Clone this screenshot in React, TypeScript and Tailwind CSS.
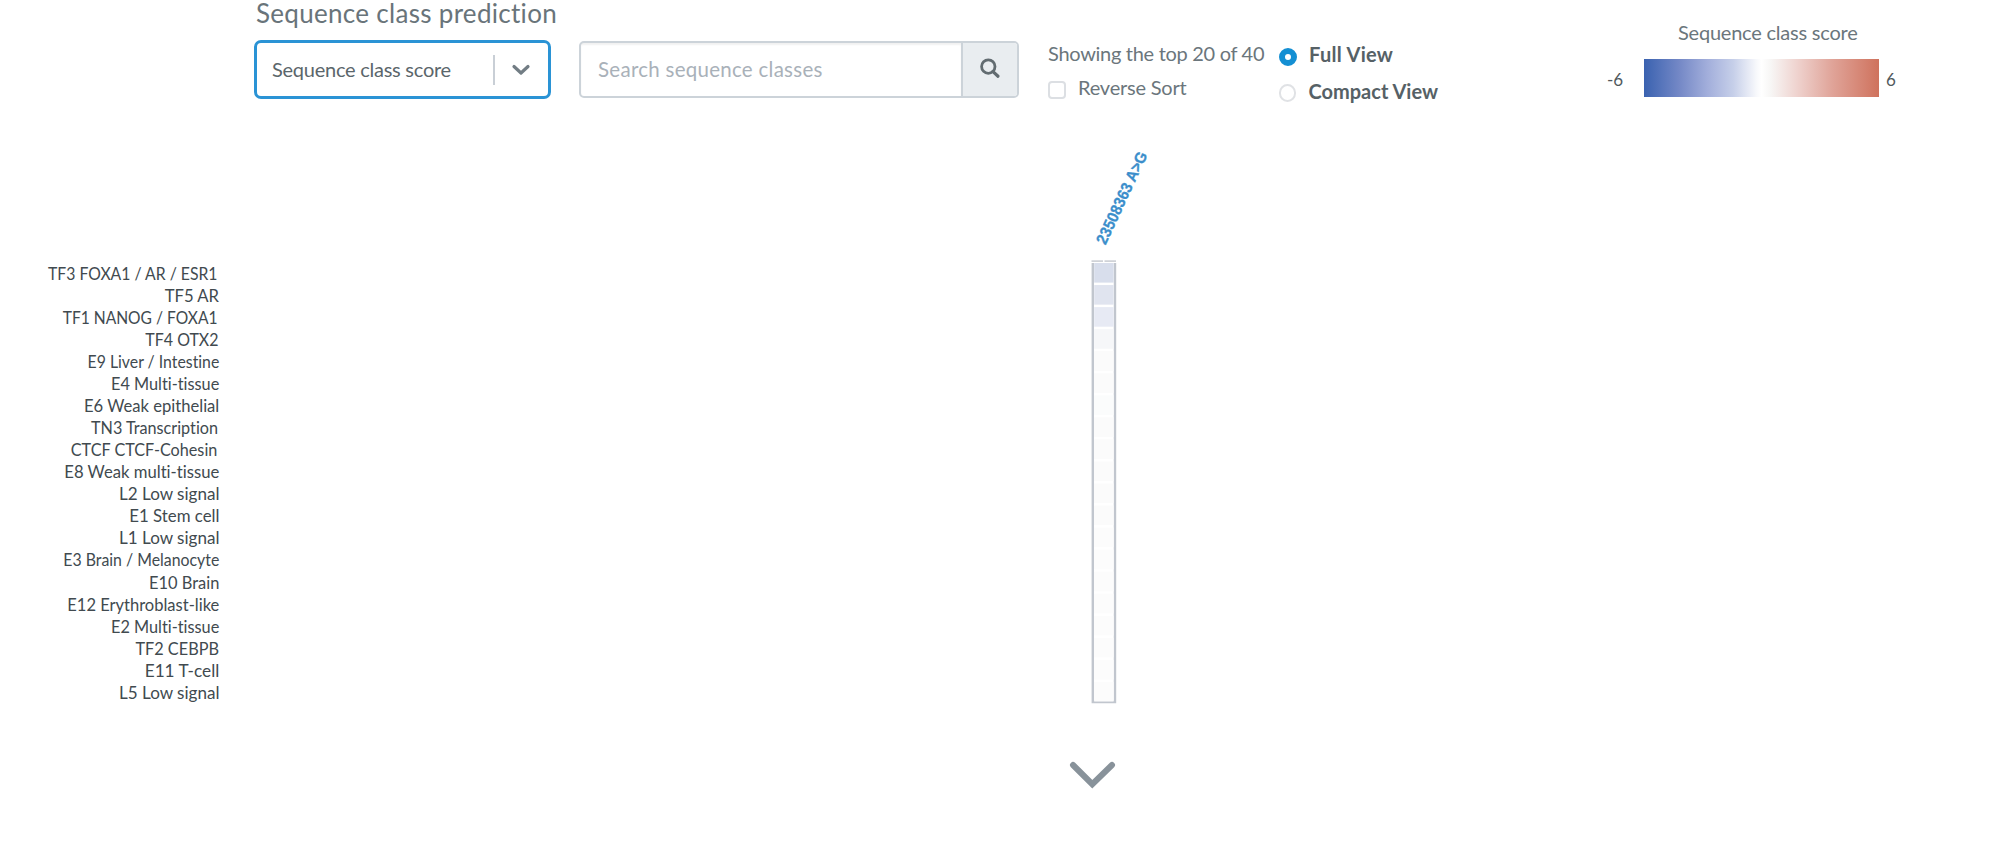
import React from "react";

type Row = { label: string; left: number; right: number; color: string };

const rows: Row[] = [
  { label: "TF3 FOXA1 / AR / ESR1", left: 48, right: 217.5, color: "#d8deec" },
  { label: "TF5 AR", left: 164.7, right: 219, color: "#e0e4ef" },
  { label: "TF1 NANOG / FOXA1", left: 62.7, right: 217.5, color: "#e7eaf4" },
  { label: "TF4 OTX2", left: 145.3, right: 218.5, color: "#f6f7f9" },
  { label: "E9 Liver / Intestine", left: 87.6, right: 219.3, color: "#fbfbfb" },
  { label: "E4 Multi-tissue", left: 111, right: 219.3, color: "#fbfbfb" },
  { label: "E6 Weak epithelial", left: 84, right: 219.3, color: "#fbfcfc" },
  { label: "TN3 Transcription", left: 91, right: 218, color: "#fbfbfb" },
  { label: "CTCF CTCF-Cohesin", left: 70.8, right: 217.3, color: "#fbfbfb" },
  { label: "E8 Weak multi-tissue", left: 64.3, right: 219.3, color: "#fbfbfb" },
  { label: "L2 Low signal", left: 119, right: 219.5, color: "#fbfbfb" },
  { label: "E1 Stem cell", left: 129.3, right: 219.5, color: "#fbfbfb" },
  { label: "L1 Low signal", left: 119, right: 219.5, color: "#fcfcfc" },
  { label: "E3 Brain / Melanocyte", left: 63.3, right: 219.3, color: "#fcfcfc" },
  { label: "E10 Brain", left: 149, right: 219.3, color: "#fcfcfc" },
  { label: "E12 Erythroblast-like", left: 67.3, right: 219.3, color: "#fcfcfc" },
  { label: "E2 Multi-tissue", left: 111, right: 219.3, color: "#fcfcfc" },
  { label: "TF2 CEBPB", left: 135.4, right: 219, color: "#fcfcfc" },
  { label: "E11 T-cell", left: 144.7, right: 219.3, color: "#fcfcfc" },
  { label: "L5 Low signal", left: 119, right: 219.5, color: "#fcfcfc" },
];

const PITCH = 22.05;

function MetricSelect() {
  return (
    <button className="flex h-[59px] w-[297px] items-center rounded-[7px] border-[3px] border-[#2a93d5] bg-white pl-[15px] text-left">
      <span className="w-[221px] whitespace-nowrap pb-[2px] text-[20px] leading-[24px] tracking-[-0.25px] text-[#5b666b]">
        Sequence class score
      </span>
      <span className="h-[30px] w-[1.5px] bg-[#c9cfd6]" />
      <svg className="ml-[16px]" width="20" height="14" viewBox="0 0 20 14">
        <path d="M3 3.5 L10 10 L17 3.5" fill="none" stroke="#727d84" strokeWidth="3.2" strokeLinecap="round" strokeLinejoin="round" />
      </svg>
    </button>
  );
}

function SearchBox() {
  return (
    <div className="mt-px flex h-[57px] w-[440px] overflow-hidden rounded-[5px] border-2 border-[#ccd3d9] bg-white">
      <div className="flex flex-1 items-center pl-[17px] shadow-[inset_0_2px_2px_rgba(0,0,0,0.06)]">
        <span className="whitespace-nowrap pb-[2px] text-[20.5px] leading-[24px] tracking-[0.27px] text-[#a9b1b9]">
          Search sequence classes
        </span>
      </div>
      <div className="flex w-[56px] items-center justify-center border-l-2 border-[#ccd3d9] bg-[#e9edf0]">
        <svg className="mb-px" width="22" height="22" viewBox="0 0 22 22">
          <circle cx="9.3" cy="8.6" r="6.7" fill="none" stroke="#626c71" strokeWidth="2.8" />
          <path d="M14 13.6 L19 18.2" stroke="#626c71" strokeWidth="3.2" strokeLinecap="round" />
        </svg>
      </div>
    </div>
  );
}

function Legend() {
  return (
    <div className="ml-[168px] mt-[20px] flex flex-col text-[#5f696e]">
      <div className="ml-[72px] whitespace-nowrap text-[20px] leading-[24px] tracking-[-0.22px] text-[#6b767c]">
        Sequence class score
      </div>
      <div className="mt-[15px] flex h-[38px] items-center text-[17px] text-[#51595d]">
        <span className="w-[38px] pl-px pt-[4px]">-6</span>
        <div className="h-[38px] w-[235px] bg-[linear-gradient(to_right,#3a62b0_0%,#7488c6_15%,#a2aedb_27%,#c6cfe9_38%,#f8f9fc_48%,#ffffff_50%,#f7f6f5_54%,#efd3cf_65%,#e0a499_80%,#cf725d_100%)]" />
        <span className="ml-[7px] pt-[4px]">6</span>
      </div>
    </div>
  );
}

function Heatmap() {
  return (
    <svg className="block" width="1999" height="727" viewBox="0 120 1999 727">
      {rows.map((r, i) => (
        <text
          key={r.label}
          x={r.left}
          y={280.1 + i * 22.03}
          textLength={r.right - r.left}
          lengthAdjust="spacingAndGlyphs"
          fontSize="16.8"
          fill="#414a4f"
        >
          {r.label}
        </text>
      ))}
      <text
        transform="translate(1105.5 245.5) rotate(-65)"
        fontFamily="Liberation Sans, sans-serif"
        fontWeight="700"
        fontSize="16"
        textLength="100"
        lengthAdjust="spacingAndGlyphs"
        fill="#3b8ecb"
        stroke="#3b8ecb"
        strokeWidth="0.3"
      >
        {"23508363 A>G"}
      </text>
      <path d="M1091.5 261.2 H1103 M1104.5 261.2 H1116" stroke="#cfd2d7" strokeWidth="1.8" />
      <path d="M1092.8 263 V702 H1115 V263" fill="none" stroke="#c1c6ce" strokeWidth="2.4" />
      {rows.map((r, i) => (
        <rect key={r.label} x="1094.2" y={263 + i * PITCH} width="19.4" height="19.6" fill={r.color} />
      ))}
      <path d="M1073 765 L1092.3 784.2 L1112 765" fill="none" stroke="#88929a" strokeWidth="6" strokeLinecap="round" />
    </svg>
  );
}

export default function App() {
  return (
    <main className="h-[847px] w-[1999px] overflow-hidden bg-white font-['Lato',sans-serif] [font-variant-ligatures:none]">
      <header className="flex h-[120px] items-start pl-[254px]">
        <div className="w-[297px]">
          <h1 className="h-[40px] whitespace-nowrap pl-[2px] text-[26px] leading-[26px] tracking-[0.3px] text-[#69747a]">
            Sequence class prediction
          </h1>
          <MetricSelect />
        </div>
        <div className="ml-[28px] mt-[40px]">
          <SearchBox />
        </div>
        <div className="ml-[29px] mt-[41px] w-[231px] text-[20px] leading-[24px] text-[#6b767c]">
          <div className="whitespace-nowrap tracking-[-0.3px]">Showing the top 20 of 40</div>
          <label className="mt-[10px] flex items-center">
            <span className="mt-[5px] h-[18px] w-[18px] rounded-[4px] border-2 border-[#dcdfe3] bg-white" />
            <span className="ml-[12px] whitespace-nowrap tracking-[-0.2px]">Reverse Sort</span>
          </label>
        </div>
        <div className="mt-[41px] w-[159px] text-[20px] font-bold leading-[24px] text-[#566166]">
          <label className="flex items-center">
            <span className="mt-[7px] h-[18px] w-[18px] rounded-full border-[6px] border-[#148fd3] bg-white" />
            <span className="ml-[12px] whitespace-nowrap tracking-[0.3px]">Full View</span>
          </label>
          <label className="mt-[13px] flex items-center">
            <span className="mt-[3px] h-[18px] w-[18px] rounded-full border-2 border-[#e0e2e5] bg-white" />
            <span className="ml-[12px] whitespace-nowrap">Compact View</span>
          </label>
        </div>
        <Legend />
      </header>
      <Heatmap />
    </main>
  );
}
